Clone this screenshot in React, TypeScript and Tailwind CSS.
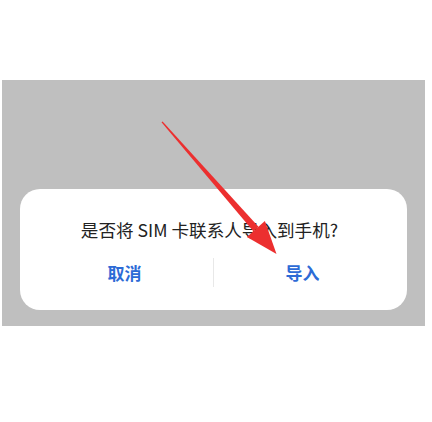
import React from "react";

export default function App() {
  const font = { fontFamily: '"Noto Sans CJK SC", "Noto Sans", sans-serif' };
  return (
    <div className="relative w-[432px] h-[422px] bg-white overflow-hidden" style={font}>
      <div className="absolute left-[2px] top-[80px] w-[423px] h-[246px] bg-[#bfbfbf]" />
      <div className="relative pt-[189px] pl-[20px]">
        <div className="w-[387px] h-[121px] bg-white rounded-[20px] flex flex-col">
          <div className="pt-[30px] h-[52px] flex justify-center pr-[8px]">
            <span className="text-[17.6px] text-[#222] leading-[22px]">是否将 SIM 卡联系人导入到手机?</span>
          </div>
          <div className="flex items-center px-4 h-[30px] mt-[16px]">
            <div className="flex-1 flex justify-center">
              <span className="text-[17px] font-bold text-[#2d6bd6] leading-none">取消</span>
            </div>
            <div className="w-px h-[29px] bg-[#e8e8e8]" />
            <div className="flex-1 flex justify-center">
              <span className="text-[17px] font-bold text-[#2d6bd6] leading-none">导入</span>
            </div>
          </div>
        </div>
      </div>
      <svg className="absolute left-0 top-0" width="432" height="422" viewBox="0 0 432 422">
        <polygon
          points="161.5,122.3 162.6,121.6 258.5,226.7 253.3,231.3"
          fill="#ec2f2f"
        />
        <polygon points="276.5,254 246.9,236.9 264.9,221.1" fill="#ec2f2f" />
      </svg>
    </div>
  );
}
